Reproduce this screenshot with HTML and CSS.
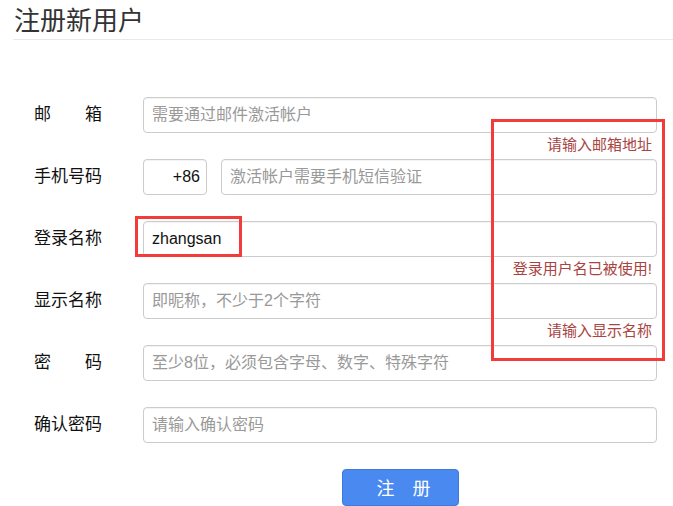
FILE: index.html
```html
<!DOCTYPE html>
<html lang="zh-CN">
<head>
<meta charset="utf-8">
<title>注册新用户</title>
<link rel="stylesheet" href="styles.css">
</head>
<body>
<div class="page">
  <h1 class="title">注册新用户</h1>
  <form class="form">
    <div class="field">
      <label class="label"><span>邮箱</span></label>
      <div class="control"><input class="input" type="text" placeholder="需要通过邮件激活帐户"></div>
    </div>
    <div class="help">请输入邮箱地址</div>

    <div class="field">
      <label class="label"><span>手机号码</span></label>
      <div class="control phone">
        <input class="input prefix" type="text" value="+86" readonly>
        <input class="input grow" type="text" placeholder="激活帐户需要手机短信验证">
      </div>
    </div>
    <div class="help"></div>

    <div class="field">
      <label class="label"><span>登录名称</span></label>
      <div class="control"><input class="input" type="text" value="zhangsan"></div>
    </div>
    <div class="help">登录用户名已被使用!</div>

    <div class="field">
      <label class="label"><span>显示名称</span></label>
      <div class="control"><input class="input" type="text" placeholder="即昵称，不少于2个字符"></div>
    </div>
    <div class="help">请输入显示名称</div>

    <div class="field">
      <label class="label"><span>密码</span></label>
      <div class="control"><input class="input" type="password" placeholder="至少8位，必须包含字母、数字、特殊字符"></div>
    </div>
    <div class="help"></div>

    <div class="field">
      <label class="label"><span>确认密码</span></label>
      <div class="control"><input class="input" type="password" placeholder="请输入确认密码"></div>
    </div>
    <div class="help"></div>

    <div class="actions">
      <button class="btn" type="button">注　册</button>
    </div>
  </form>
  <div class="mark mark-errors"></div>
  <div class="mark mark-name"></div>
</div>
</body>
</html>
```
FILE: styles.css
```css
html, body {
  margin: 0;
  padding: 0;
  background: #fff;
}
body {
  font-family: "Liberation Sans", "Noto Sans CJK SC", sans-serif;
  color: #222;
  overflow: hidden;
}
.page {
  position: relative;
  width: 673px;
  height: 506px;
  overflow: hidden;
}
.title {
  margin: 0 0 0 13px;
  padding: 5px 0 2px 1px;
  font-size: 26px;
  line-height: 32px;
  font-weight: normal;
  color: #333;
  border-bottom: 1px solid #e8e8e8;
}
.form {
  padding: 57px 16px 0 34px;
}
.field {
  display: flex;
  align-items: center;
  height: 36px;
}
.label {
  width: 109px;
  flex: none;
  font-size: 17px;
  line-height: 20px;
  color: #111;
}
.label span {
  display: inline-block;
  width: 68px;
  text-align: justify;
  text-align-last: justify;
}
.control {
  flex: 1;
  display: flex;
  height: 36px;
}
.phone {
  gap: 14px;
}
.input {
  box-sizing: border-box;
  width: 100%;
  height: 36px;
  margin: 0;
  padding: 0 8px;
  border: 1px solid #cccccc;
  border-radius: 4px;
  box-shadow: inset 0 1px 1px rgba(0, 0, 0, 0.05);
  font-family: "Liberation Sans", "Noto Sans CJK SC", sans-serif;
  font-size: 16px;
  color: #111;
  background: #fff;
  outline: none;
}
.input::placeholder {
  color: #999;
}
.prefix {
  width: 64px;
  flex: none;
  text-align: right;
  padding-right: 6px;
}
.grow {
  flex: 1;
  width: auto;
  min-width: 0;
}
.help {
  box-sizing: border-box;
  height: 26px;
  margin-left: 109px;
  padding: 3px 5px 0 0;
  text-align: right;
  font-size: 15px;
  line-height: 17px;
  color: #a94442;
}
.actions {
  margin-left: 109px;
  display: flex;
  justify-content: center;
}
.btn {
  box-sizing: border-box;
  width: 117px;
  height: 37px;
  margin: 0;
  padding: 0 0 0 7px;
  border: 1px solid #3d7ad9;
  border-radius: 4px;
  background: #4a8af0;
  color: #fff;
  font-family: "Noto Sans CJK SC", sans-serif;
  font-size: 18px;
  line-height: 35px;
}
.mark {
  position: absolute;
  box-sizing: border-box;
  border: 3px solid #f23b3b;
  pointer-events: none;
}
.mark-errors {
  left: 491px;
  top: 119px;
  width: 174px;
  height: 242px;
}
.mark-name {
  left: 135px;
  top: 216px;
  width: 107px;
  height: 41px;
}
```
